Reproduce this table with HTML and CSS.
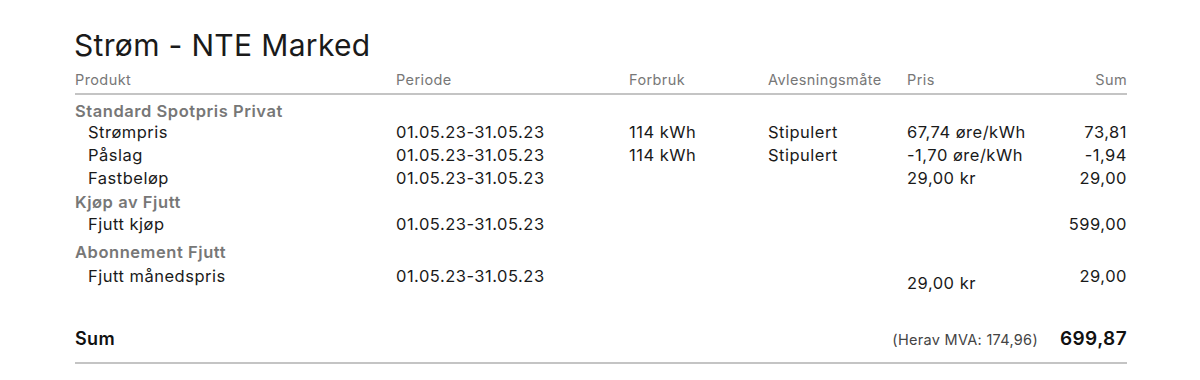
FILE: index.html
```html
<!DOCTYPE html>
<html lang="no">
<head>
<meta charset="utf-8">
<link rel="stylesheet" href="styles.css">
</head>
<body>
<div class="invoice">
  <h1 class="title">Strøm - NTE Marked</h1>
  <div class="row head">
    <div>Produkt</div><div>Periode</div><div>Forbruk</div><div>Avlesningsmåte</div><div>Pris</div><div class="num">Sum</div>
  </div>
  <div class="group g1">
    <div class="group-title">Standard Spotpris Privat</div>
    <div class="row item">
      <div class="name">Strømpris</div><div>01.05.23-31.05.23</div><div>114 kWh</div><div>Stipulert</div><div>67,74 øre/kWh</div><div class="num">73,81</div>
    </div>
    <div class="row item">
      <div class="name">Påslag</div><div>01.05.23-31.05.23</div><div>114 kWh</div><div>Stipulert</div><div>-1,70 øre/kWh</div><div class="num">-1,94</div>
    </div>
    <div class="row item">
      <div class="name">Fastbeløp</div><div>01.05.23-31.05.23</div><div></div><div></div><div>29,00 kr</div><div class="num">29,00</div>
    </div>
  </div>
  <div class="group g2">
    <div class="group-title">Kjøp av Fjutt</div>
    <div class="row item">
      <div class="name">Fjutt kjøp</div><div>01.05.23-31.05.23</div><div></div><div></div><div></div><div class="num">599,00</div>
    </div>
  </div>
  <div class="group g3">
    <div class="group-title">Abonnement Fjutt</div>
    <div class="row item">
      <div class="name">Fjutt månedspris</div><div>01.05.23-31.05.23</div><div></div><div></div><div class="low">29,00 kr</div><div class="num">29,00</div>
    </div>
  </div>
  <div class="total">
    <div class="total-label">Sum</div>
    <div class="total-vat">(Herav MVA: 174,96)</div>
    <div class="total-sum">699,87</div>
  </div>
</div>
</body>
</html>
```
FILE: styles.css
```css
html, body {
  margin: 0;
  padding: 0;
  background: #fff;
}
body {
  font-family: Inter, "Noto Sans", "Liberation Sans", sans-serif;
  color: #1c1c1c;
}
.invoice {
  width: 1052px;
  margin-left: 75px;
  padding-top: 27px;
}
.title {
  margin: 0 0 0 -1px;
  font-size: 30px;
  line-height: 36px;
  font-weight: 400;
  letter-spacing: 0.33px;
  color: #1a1a1a;
}
.row {
  display: grid;
  grid-template-columns: 321px 233px 139px 139px 1fr 100px;
  white-space: nowrap;
}
.num {
  text-align: right;
}
.head {
  margin-top: 7px;
  font-size: 14.5px;
  letter-spacing: 0.4px;
  line-height: 20px;
  color: #777;
  padding-bottom: 3px;
  border-bottom: 2px solid #c4c4c4;
}
.group-title {
  font-size: 16.5px;
  letter-spacing: 0.55px;
  line-height: 19px;
  font-weight: 600;
  color: #777;
}
.g1 { margin-top: 7px; }
.g2 { margin-top: 3px; }
.g3 { margin-top: 7px; }
.item {
  font-size: 16.5px;
  letter-spacing: 0.5px;
  line-height: 23px;
  color: #1a1a1a;
}
.g2 .item { margin-top: 1px; }
.g3 .item { margin-top: 3px; }
.name {
  padding-left: 13px;
}
.low {
  padding-top: 7px;
}
.total {
  display: flex;
  align-items: baseline;
  margin-top: 32px;
  padding-bottom: 11px;
  border-bottom: 2px solid #c4c4c4;
}
.total-label {
  flex: 1;
  font-size: 18px;
  letter-spacing: 0.4px;
  line-height: 24px;
  font-weight: 600;
  color: #111;
}
.total-vat {
  font-size: 14.5px;
  letter-spacing: 0.3px;
  color: #444;
  margin-right: 22px;
}
.total-sum {
  font-size: 19px;
  letter-spacing: 0.4px;
  line-height: 24px;
  font-weight: 600;
  color: #111;
}
```
